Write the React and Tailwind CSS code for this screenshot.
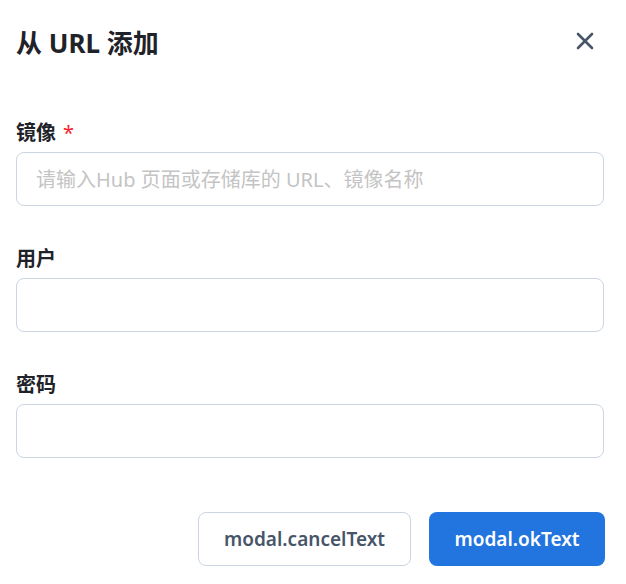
import { useState } from 'react';

const font = { fontFamily: '"Noto Sans", "Noto Sans CJK SC", sans-serif' };

function Field({ label, required, placeholder, type = 'text' }) {
  const [value, setValue] = useState('');
  return (
    <div className="flex flex-col">
      <label className="flex items-center gap-[7px] text-[20px] leading-[20px] font-bold text-[#1f2329]">
        {label}
        {required && <span className="text-[#f5222d] font-normal">*</span>}
      </label>
      <input
        type={type}
        value={value}
        onChange={(event) => setValue(event.target.value)}
        placeholder={placeholder}
        className="mt-[9px] h-[54px] w-full rounded-lg border border-[#cbd5e1] bg-white px-[19px] text-[20px] text-[#1f2329] outline-none placeholder:text-[#c4c4c4]"
      />
    </div>
  );
}

export default function App() {
  return (
    <div style={font} className="min-h-screen bg-white pl-4 pr-[22px] pt-[25px]">
      <div className="flex h-[36px] items-center justify-between">
        <h1 className="text-[26px] leading-[36px] font-bold text-[#1f2329]">从 URL 添加</h1>
        <button className="mb-1 mr-[10px] text-[#475569]">
          <svg width="18" height="18" viewBox="0 0 18 18" fill="none" stroke="currentColor" strokeWidth="2.6" strokeLinecap="round">
            <path d="M2 2 L16 16 M16 2 L2 16" />
          </svg>
        </button>
      </div>
      <div className="mt-[62px] flex flex-col gap-[43px]">
        <Field label="镜像" required placeholder="请输入Hub 页面或存储库的 URL、镜像名称" />
        <Field label="用户" />
        <Field label="密码" type="password" />
      </div>
      <div className="mt-[54px] flex justify-end gap-[18px]">
        <button className="h-[54px] w-[213px] rounded-lg border border-[#cbd5e1] bg-white text-[19px] font-semibold text-[#475569]">
          modal.cancelText
        </button>
        <button className="mr-[-1px] h-[54px] w-[176px] rounded-lg bg-[#2274de] text-[19px] font-semibold text-white">
          modal.okText
        </button>
      </div>
    </div>
  );
}
